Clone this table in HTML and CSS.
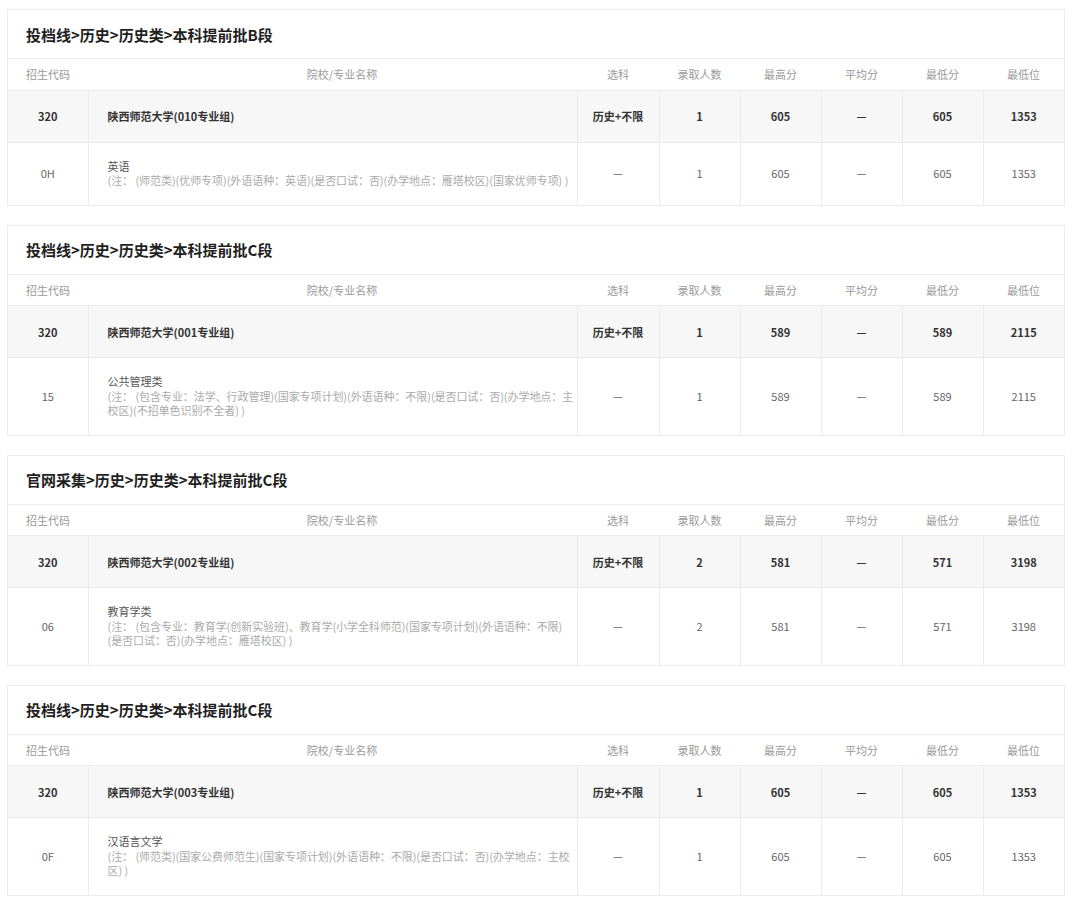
FILE: index.html
```html
<!DOCTYPE html>
<html lang="zh-CN">
<head>
<meta charset="utf-8">
<title>投档线</title>
<link rel="stylesheet" href="styles.css">
</head>
<body>
<main class="page">

<section class="card">
  <h2 class="card-title">投档线&gt;历史&gt;历史类&gt;本科提前批B段</h2>
  <table class="grid">
    <colgroup><col class="c-code"><col class="c-name"><col class="c-sub"><col class="c-num"><col class="c-num"><col class="c-num"><col class="c-num"><col class="c-num"></colgroup>
    <thead><tr><th>招生代码</th><th class="name-h">院校/专业名称</th><th>选科</th><th>录取人数</th><th>最高分</th><th>平均分</th><th>最低分</th><th>最低位</th></tr></thead>
    <tbody>
      <tr class="group"><td>320</td><td class="name">陕西师范大学(010专业组)</td><td>历史+不限</td><td>1</td><td>605</td><td>—</td><td>605</td><td>1353</td></tr>
      <tr class="major"><td>0H</td><td class="name"><div class="major-name">英语</div><div class="note">(注： (师范类)(优师专项)(外语语种：英语)(是否口试：否)(办学地点：雁塔校区)(国家优师专项) )</div></td><td>—</td><td>1</td><td>605</td><td>—</td><td>605</td><td>1353</td></tr>
    </tbody>
  </table>
</section>

<section class="card">
  <h2 class="card-title">投档线&gt;历史&gt;历史类&gt;本科提前批C段</h2>
  <table class="grid">
    <colgroup><col class="c-code"><col class="c-name"><col class="c-sub"><col class="c-num"><col class="c-num"><col class="c-num"><col class="c-num"><col class="c-num"></colgroup>
    <thead><tr><th>招生代码</th><th class="name-h">院校/专业名称</th><th>选科</th><th>录取人数</th><th>最高分</th><th>平均分</th><th>最低分</th><th>最低位</th></tr></thead>
    <tbody>
      <tr class="group"><td>320</td><td class="name">陕西师范大学(001专业组)</td><td>历史+不限</td><td>1</td><td>589</td><td>—</td><td>589</td><td>2115</td></tr>
      <tr class="major"><td>15</td><td class="name"><div class="major-name">公共管理类</div><div class="note">(注： (包含专业：法学、行政管理)(国家专项计划)(外语语种：不限)(是否口试：否)(办学地点：主校区)(不招单色识别不全者) )</div></td><td>—</td><td>1</td><td>589</td><td>—</td><td>589</td><td>2115</td></tr>
    </tbody>
  </table>
</section>

<section class="card">
  <h2 class="card-title">官网采集&gt;历史&gt;历史类&gt;本科提前批C段</h2>
  <table class="grid">
    <colgroup><col class="c-code"><col class="c-name"><col class="c-sub"><col class="c-num"><col class="c-num"><col class="c-num"><col class="c-num"><col class="c-num"></colgroup>
    <thead><tr><th>招生代码</th><th class="name-h">院校/专业名称</th><th>选科</th><th>录取人数</th><th>最高分</th><th>平均分</th><th>最低分</th><th>最低位</th></tr></thead>
    <tbody>
      <tr class="group"><td>320</td><td class="name">陕西师范大学(002专业组)</td><td>历史+不限</td><td>2</td><td>581</td><td>—</td><td>571</td><td>3198</td></tr>
      <tr class="major"><td>06</td><td class="name"><div class="major-name">教育学类</div><div class="note">(注： (包含专业：教育学(创新实验班)、教育学(小学全科师范)(国家专项计划)(外语语种：不限)(是否口试：否)(办学地点：雁塔校区) )</div></td><td>—</td><td>2</td><td>581</td><td>—</td><td>571</td><td>3198</td></tr>
    </tbody>
  </table>
</section>

<section class="card">
  <h2 class="card-title">投档线&gt;历史&gt;历史类&gt;本科提前批C段</h2>
  <table class="grid">
    <colgroup><col class="c-code"><col class="c-name"><col class="c-sub"><col class="c-num"><col class="c-num"><col class="c-num"><col class="c-num"><col class="c-num"></colgroup>
    <thead><tr><th>招生代码</th><th class="name-h">院校/专业名称</th><th>选科</th><th>录取人数</th><th>最高分</th><th>平均分</th><th>最低分</th><th>最低位</th></tr></thead>
    <tbody>
      <tr class="group"><td>320</td><td class="name">陕西师范大学(003专业组)</td><td>历史+不限</td><td>1</td><td>605</td><td>—</td><td>605</td><td>1353</td></tr>
      <tr class="major"><td>0F</td><td class="name"><div class="major-name">汉语言文学</div><div class="note">(注： (师范类)(国家公费师范生)(国家专项计划)(外语语种：不限)(是否口试：否)(办学地点：主校区) )</div></td><td>—</td><td>1</td><td>605</td><td>—</td><td>605</td><td>1353</td></tr>
    </tbody>
  </table>
</section>

</main>
</body>
</html>
```

FILE: styles.css
```css
* { box-sizing: border-box; }

html, body {
  margin: 0;
  padding: 0;
  background: #ffffff;
}

body {
  font-family: "Noto Sans CJK SC", "Noto Sans", "Liberation Sans", sans-serif;
  color: #333;
}

.page {
  display: flex;
  flex-direction: column;
  gap: 19px;
  width: 1058px;
  margin: 9px 0 0 7px;
}

.card {
  border: 1px solid #ececec;
  background: #fff;
}

.card-title {
  margin: 0;
  height: 49px;
  padding: 0 0 0 18px;
  display: flex;
  align-items: center;
  font-size: 15px;
  font-weight: 700;
  color: #1f1f1f;
  border-bottom: 1px solid #eeeeee;
}

.grid {
  width: 100%;
  border-collapse: collapse;
  table-layout: fixed;
  font-size: 11px;
}

.c-code { width: 80px; }
.c-name { width: 489px; }
.c-sub { width: 82px; }
.c-num { width: 81px; }

.grid th {
  height: 31px;
  font-weight: 400;
  color: #9a9a9a;
  text-align: center;
  padding: 0;
  border-bottom: 1px solid #ececec;
}

.grid th:first-child {
  text-align: left;
  padding-left: 18px;
}

.grid th.name-h {
  padding-left: 19px;
}

.grid td {
  text-align: center;
  padding: 0;
  border-left: 1px solid #ececec;
  vertical-align: middle;
}

.grid td:first-child { border-left: none; }

.group td {
  height: 52px;
  background: #f7f7f7;
  font-weight: 700;
  color: #333;
  border-bottom: 1px solid #e8e8e8;
}

.major td {
  color: #666;
  padding: 16px 0 17px;
}

.grid td.name {
  text-align: left;
  padding-left: 19px;
  padding-right: 1px;
}

.major-name {
  color: #555;
  line-height: 14.5px;
}

.note {
  color: #aaaaaa;
  line-height: 14.5px;
  letter-spacing: -0.06px;
}
```
